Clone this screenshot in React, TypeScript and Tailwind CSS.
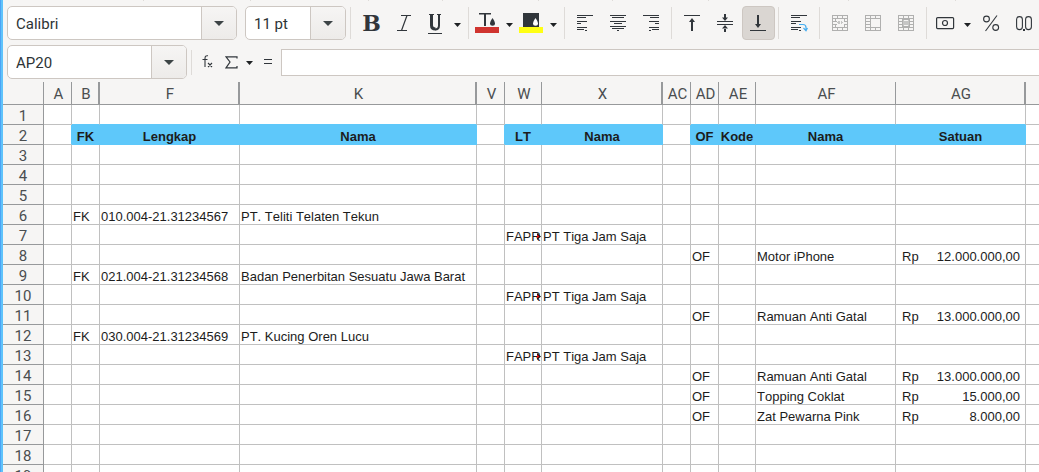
import { ReactNode } from "react";
import clsx from "clsx";

interface Column {
  name: string;
  width: string;
  filled?: boolean;
  // a hidden column follows, so the header edge is drawn thicker
  hiddenAfter?: boolean;
}

const columns: Column[] = [
  { name: "A", width: "w-[28px]" },
  { name: "B", width: "w-[28px]", filled: true, hiddenAfter: true },
  { name: "F", width: "w-[140px]", filled: true, hiddenAfter: true },
  { name: "K", width: "w-[237px]", filled: true, hiddenAfter: true },
  { name: "V", width: "w-[28px]" },
  { name: "W", width: "w-[37px]", filled: true },
  { name: "X", width: "w-[121px]", filled: true, hiddenAfter: true },
  { name: "AC", width: "w-[28px]" },
  { name: "AD", width: "w-[28px]", filled: true },
  { name: "AE", width: "w-[37px]", filled: true },
  { name: "AF", width: "w-[140px]", filled: true },
  { name: "AG", width: "w-[130px]", filled: true, hiddenAfter: true },
  { name: "", width: "" },
];

const cells: Record<number, Record<string, string>> = {
  2: { B: "FK", F: "Lengkap", K: "Nama", W: "LT", X: "Nama", AD: "OF", AE: "Kode", AF: "Nama", AG: "Satuan" },
  6: { B: "FK", F: "010.004-21.31234567", K: "PT. Teliti Telaten Tekun" },
  7: { W: "FAPR", X: "PT Tiga Jam Saja" },
  8: { AD: "OF", AF: "Motor iPhone", AG: "12.000.000,00" },
  9: { B: "FK", F: "021.004-21.31234568", K: "Badan Penerbitan Sesuatu Jawa Barat" },
  10: { W: "FAPR", X: "PT Tiga Jam Saja" },
  11: { AD: "OF", AF: "Ramuan Anti Gatal", AG: "13.000.000,00" },
  12: { B: "FK", F: "030.004-21.31234569", K: "PT. Kucing Oren Lucu" },
  13: { W: "FAPR", X: "PT Tiga Jam Saja" },
  14: { AD: "OF", AF: "Ramuan Anti Gatal", AG: "13.000.000,00" },
  15: { AD: "OF", AF: "Topping Coklat", AG: "15.000,00" },
  16: { AD: "OF", AF: "Zat Pewarna Pink", AG: "8.000,00" },
};

const rows = Array.from({ length: 19 }, (_, i) => i + 1);

const Caret = () => (
  <svg width="7" height="4" viewBox="0 0 7 4" fill="#1f2224">
    <path d="M0 0h7L3.5 4z" />
  </svg>
);

interface ComboProps {
  label: string;
  value: string;
  className: string;
}

const Combo = ({ label, value, className }: ComboProps) => (
  <div className={clsx("flex h-[34px] shrink-0 overflow-hidden rounded-[5px] border border-[#cdc7c2] bg-white", className)}>
    <input
      aria-label={label}
      defaultValue={value}
      className="min-w-0 flex-1 bg-transparent px-2 pt-0.5 text-[15px] text-[#2e3436] outline-none"
    />
    <button
      aria-label={`${label} list`}
      className="flex w-[35px] shrink-0 items-center justify-center border-l border-[#cdc7c2] bg-linear-to-b from-[#f6f5f4] to-[#edebe9]"
    >
      <svg width="10" height="5" viewBox="0 0 10 5" fill="#3d4446">
        <path d="M0 0h10L5 5z" />
      </svg>
    </button>
  </div>
);

interface ToolProps {
  label: string;
  active?: boolean;
  split?: boolean;
  children: ReactNode;
}

const Tool = ({ label, active, split, children }: ToolProps) => (
  <>
    <button
      aria-label={label}
      aria-pressed={active}
      className={clsx(
        "flex h-[34px] shrink-0 items-center justify-center",
        split ? "w-[29px]" : "w-[33px]",
        active && "rounded-[4px] border border-[#cdc7c2] bg-[#dad6d2]"
      )}
    >
      {children}
    </button>
    {split && (
      <button aria-label={`${label} options`} className="flex h-[34px] w-[15px] shrink-0 items-center justify-center pt-1">
        <Caret />
      </button>
    )}
  </>
);

const Separator = () => <div className="mr-1 ml-[3px] h-8 w-px shrink-0 bg-[#dedbd8]" />;

interface IconProps {
  w?: number;
  h?: number;
  children: ReactNode;
}

const Icon = ({ w = 17, h = 17, children }: IconProps) => (
  <svg width={w} height={h} viewBox={`0 0 ${w} ${h}`} fill="#31363b" className="shrink-0">
    {children}
  </svg>
);

const MergeGrid = ({ children }: { children: ReactNode }) => (
  <svg width="17" height="17" viewBox="0 0 17 17" fill="none" stroke="#b0b0af" shapeRendering="crispEdges">
    <path d="M.5 .5h15v15H.5zM.5 3.5h15M.5 12.5h15M5.5 .5v3M10.5 .5v3M5.5 12.5v3M10.5 12.5v3" />
    {children}
  </svg>
);

const FormatToolbar = () => (
  <div role="toolbar" aria-label="Formatting" className="flex items-center">
    <Combo label="Font name" value="Calibri" className="w-[230px]" />
    <Combo label="Font size" value="11 pt" className="ml-2 w-[101px]" />
    <div className="ml-px flex items-center">
      <Separator />
      <Tool label="Bold">
        <span className="font-['DejaVu_Serif'] text-[22px] leading-none font-bold text-[#31363b]">B</span>
      </Tool>
      <Tool label="Italic">
        <Icon>
          <path d="M5 .5h10M1 15.5h10M11 .5L5.5 15.5" fill="none" stroke="#31363b" strokeWidth="1.2" />
        </Icon>
      </Tool>
      <Tool label="Underline" split>
        <svg width="15" height="20" viewBox="0 0 15 20" fill="none" stroke="#31363b" className="mt-[2px]">
          <path d="M1 .5h5M9 .5h4" />
          <path d="M3.5 0v11.5q0 3.5 4 3.5" strokeWidth="3" />
          <path d="M7 15.5q4 0 4-4V0" strokeWidth="2" />
          <path d="M0 19.5h14" shapeRendering="crispEdges" />
        </svg>
      </Tool>
      <Separator />
      <Tool label="Font color" split>
        <Icon w={25} h={20}>
          <path d="M4 0h12v1.5H11V13H9V1.5H4z" />
          <path d="M17.5 5q2.5 3.5 2.5 5.3a2.5 2.5 0 0 1-5 0Q15 8.5 17.5 5z" />
          <path d="M0 14h24v6H0z" fill="#d0342f" />
        </Icon>
      </Tool>
      <Tool label="Background color" split>
        <Icon w={25} h={20}>
          <path d="M4 0h16v14H4z" />
          <path d="M16.5 5q2.5 3.5 2.5 5.3a2.5 2.5 0 0 1-5 0Q14 8.5 16.5 5z" fill="#fff" />
          <path d="M0 14h24v6H0z" fill="#ffff14" />
        </Icon>
      </Tool>
      <Separator />
      <Tool label="Align left">
        <Icon>
          <path d="M0 0h16v1H0zM0 2h9v1H0zM0 6h10v1H0zM0 8h4v1H0zM0 12h10v1H0zM0 14h7v1H0zM8 15h2v1H8z" />
        </Icon>
      </Tool>
      <Tool label="Center horizontally">
        <Icon>
          <path d="M0 0h16v1H0zM2 2h12v1H2zM0 6h16v1H0zM4 8h8v1H4zM0 11h16v1H0zM2 13h12v1H2zM7 15h2v1H7z" />
        </Icon>
      </Tool>
      <Tool label="Align right">
        <Icon>
          <path d="M0 0h16v1H0zM7 2h9v1H7zM6 6h10v1H6zM12 8h4v1h-4zM6 12h10v1H6zM9 14h7v1H9zM6 15h2v1H6z" />
        </Icon>
      </Tool>
      <Separator />
      <Tool label="Align top">
        <Icon>
          <path d="M0 0h16v1H0zM7 6h2v10H7zM8 3l3 4H5z" />
        </Icon>
      </Tool>
      <Tool label="Center vertically">
        <Icon h={19}>
          <path d="M0 7h16v1H0zM0 10h16v1H0zM7 0h2v4H7zM5 3.5h6L8 7zM7 14h2v4H7zM5 14.5h6L8 11z" />
        </Icon>
      </Tool>
      <Tool label="Align bottom" active>
        <Icon>
          <path d="M0 15h16v1H0zM7 0h2v10H7zM5 9h6l-3 4z" />
        </Icon>
      </Tool>
      <Separator />
      <Tool label="Wrap text">
        <Icon>
          <path d="M0 0h16v1H0zM0 2h9v1H0zM0 6h10v1H0zM0 8h5v1H0zM0 12h10v1H0zM0 14h7v1H0zM8 15h2v1H8z" />
          <path d="M8 9.5h4q3 0 3 3v3M12.5 13l2.5 2.8 1.5-2.8" fill="none" stroke="#47aef0" strokeWidth="1.2" />
        </Icon>
      </Tool>
      <Separator />
      <Tool label="Merge and center cells">
        <MergeGrid>
          <path d="M.5 6.5h4M.5 9.5h4M11.5 6.5h4M11.5 9.5h4M3.5 3.5v3M3.5 9.5v3M12.5 3.5v3M12.5 9.5v3" />
          <path d="M5 7.5L7.5 5.5v4zM11 7.5L8.5 5.5v4z" fill="#c6c6c5" stroke="none" />
        </MergeGrid>
      </Tool>
      <Tool label="Merge cells">
        <MergeGrid>
          <path d="M.5 6.5h5M.5 9.5h5M5.5 3.5v9" />
        </MergeGrid>
      </Tool>
      <Tool label="Unmerge cells">
        <MergeGrid>
          <path d="M.5 6.5h4M.5 9.5h4M11.5 6.5h4M11.5 9.5h4M4.5 3.5v9M11.5 3.5v9" />
          <path d="M5 4.5h6M5 11.5h6" />
          <path d="M5 5l2 1h2l2-1v6l-2-1H7l-2 1z" fill="#c6c6c5" stroke="none" />
        </MergeGrid>
      </Tool>
      <Separator />
      <Tool label="Format as currency" split>
        <svg width="19" height="13" viewBox="0 0 19 13" fill="none" stroke="#31363b" strokeWidth="1.2">
          <rect x=".6" y=".6" width="17" height="11" rx="1" />
          <circle cx="9" cy="6" r="2.5" />
        </svg>
      </Tool>
      <Tool label="Format as percent">
        <svg width="17" height="17" viewBox="0 0 17 17" fill="none" stroke="#31363b" strokeWidth="1.1">
          <circle cx="3.5" cy="4" r="2.9" />
          <circle cx="12.7" cy="12.5" r="2.9" />
          <path d="M14 .5L2.5 16" />
        </svg>
      </Tool>
      <Tool label="Format as number">
        <svg width="17" height="17" viewBox="0 0 17 17" fill="none" stroke="#31363b" strokeWidth="1.1">
          <rect x=".6" y="1.6" width="5.8" height="13" rx="2.9" />
          <rect x="9.6" y="1.6" width="5.8" height="13" rx="2.9" />
          <path d="M7 15h2" strokeWidth="2" />
        </svg>
      </Tool>
    </div>
  </div>
);

const FormulaBar = () => (
  <div className="flex items-center">
    <Combo label="Name box" value="AP20" className="w-[180px]" />
    <div className="mr-[3px] ml-1 h-[25px] w-px shrink-0 bg-[#dedbd8]" />
    <button aria-label="Function wizard" className="flex h-6 w-6 shrink-0 items-center justify-center">
      <svg width="11" height="14" viewBox="0 0 11 14" fill="none" stroke="#31363b" strokeWidth="1.1">
        <path d="M6 .8Q3 .2 3 3.5V12M.5 4.5h5M6 8l4 4M10 8l-4 4" />
      </svg>
    </button>
    <button aria-label="Select function" className="flex h-6 w-6 shrink-0 items-center justify-center">
      <svg width="13" height="13" viewBox="0 0 13 13" fill="none" stroke="#31363b" strokeWidth="1.2">
        <path d="M12 2.5V.8H1L5 6 1 11.8h11V10" />
      </svg>
    </button>
    <button aria-label="Function list" className="flex h-6 w-[13px] shrink-0 items-center justify-center pt-[2px]">
      <Caret />
    </button>
    <button aria-label="Formula" className="flex h-6 w-[25px] shrink-0 items-center justify-center">
      <svg width="9" height="6" viewBox="0 0 9 6" fill="#31363b">
        <path d="M0 0h8v1H0zM0 4h8v1H0z" />
      </svg>
    </button>
    <input
      aria-label="Input line"
      className="h-[27px] min-w-0 flex-1 border border-r-0 border-[#cdc7c2] bg-white px-2 font-['Liberation_Sans',sans-serif] text-[13px] outline-none"
    />
  </div>
);

const CellContent = ({ column, text }: { column: string; text: string }) => {
  if (column === "AG") {
    return (
      <div className="flex justify-between pr-[5px] pl-1.5">
        <span>Rp</span>
        <span>{text}</span>
      </div>
    );
  }
  if (column === "W") {
    return (
      <div className="relative overflow-hidden pl-px">
        {text}
        <svg width="4" height="7" viewBox="0 0 4 7" className="absolute top-1 right-0">
          <path d="M0 0l4 3.5L0 7z" fill="#111" />
          <path d="M0 1.5l2.5 2L0 5.500z" fill="#e81010" />
        </svg>
      </div>
    );
  }
  return <div className="pl-px">{text}</div>;
};

const Sheet = () => (
  <table className="mt-[3px] w-full table-fixed border-separate border-spacing-0 bg-white">
    <colgroup>
      <col className="w-[41px]" />
      {columns.map((column) => (
        <col key={column.name} className={column.width} />
      ))}
    </colgroup>
    <thead>
      <tr className="h-[23px] bg-[#f6f5f4] text-[15px] leading-5 text-[#4a4e50]">
        <td className="border-r border-b border-[#97999b] p-0" />
        {columns.map((column) => (
          <th
            key={column.name}
            scope="col"
            className={clsx(
              "border-b border-[#97999b] p-0 pt-[2px] pl-[2px] font-normal whitespace-nowrap",
              column.hiddenAfter ? "border-r-2" : column.name && "border-r"
            )}
          >
            {column.name}
          </th>
        ))}
      </tr>
    </thead>
    <tbody className="font-['Liberation_Sans',sans-serif] text-[13px] leading-[15px] text-[#1c1c1c] [font-kerning:none]">
      {rows.map((row) => (
        <tr key={row} className="h-5">
          <th
            scope="row"
            className="border-r border-b border-[#97999b] bg-[#f6f5f4] p-0 pt-1 font-['Roboto',sans-serif] text-[15px] font-normal text-[#4a4e50]"
          >
            {row}
          </th>
          {columns.map((column, i) => {
            const text = cells[row]?.[column.name];
            const title = row === 2;
            const blueRight = title && (column.filled || columns[i + 1]?.filled);
            const blueBottom = row <= 2 && column.filled;
            return (
              <td
                key={column.name}
                className={clsx(
                  "border-b p-0 pt-1 whitespace-nowrap",
                  column.name && "border-r",
                  blueRight ? "border-r-[#5ec8fa]" : "border-r-[#c0c0c0]",
                  blueBottom ? "border-b-[#5ec8fa]" : "border-b-[#c0c0c0]",
                  title && column.filled && "bg-[#5ec8fa] text-center font-bold"
                )}
              >
                {text && (title ? text : <CellContent column={column.name} text={text} />)}
              </td>
            );
          })}
        </tr>
      ))}
    </tbody>
  </table>
);

// lower ends of the separators of the toolbar above
const ToolbarEdge = () => (
  <div className="flex h-px">
    <div className="w-[141px] border-r border-[#dedbd8]" />
    <div className="w-[107px] border-r border-[#dedbd8]" />
    <div className="w-[118px] border-r border-[#dedbd8]" />
    <div className="w-[74px] border-r border-[#dedbd8]" />
    <div className="w-[96px] border-r border-[#dedbd8]" />
    <div className="w-[74px] border-r border-[#dedbd8]" />
    <div className="w-[96px] border-r border-[#dedbd8]" />
    <div className="w-[140px] border-r border-[#dedbd8]" />
    <div className="w-[107px] border-r border-[#dedbd8]" />
  </div>
);

const App = () => {
  return (
    <main className="flex h-screen overflow-hidden bg-[#f6f5f4] font-['Roboto',sans-serif]">
      <div className="w-[3px] shrink-0 border-l border-[#4da3f5] bg-[#5fc3fb]" />
      <div className="min-w-0 flex-1">
        <ToolbarEdge />
        <div className="flex flex-col gap-[5px] pt-[5px] pl-1">
          <FormatToolbar />
          <FormulaBar />
        </div>
        <Sheet />
      </div>
    </main>
  );
};

export default App;
